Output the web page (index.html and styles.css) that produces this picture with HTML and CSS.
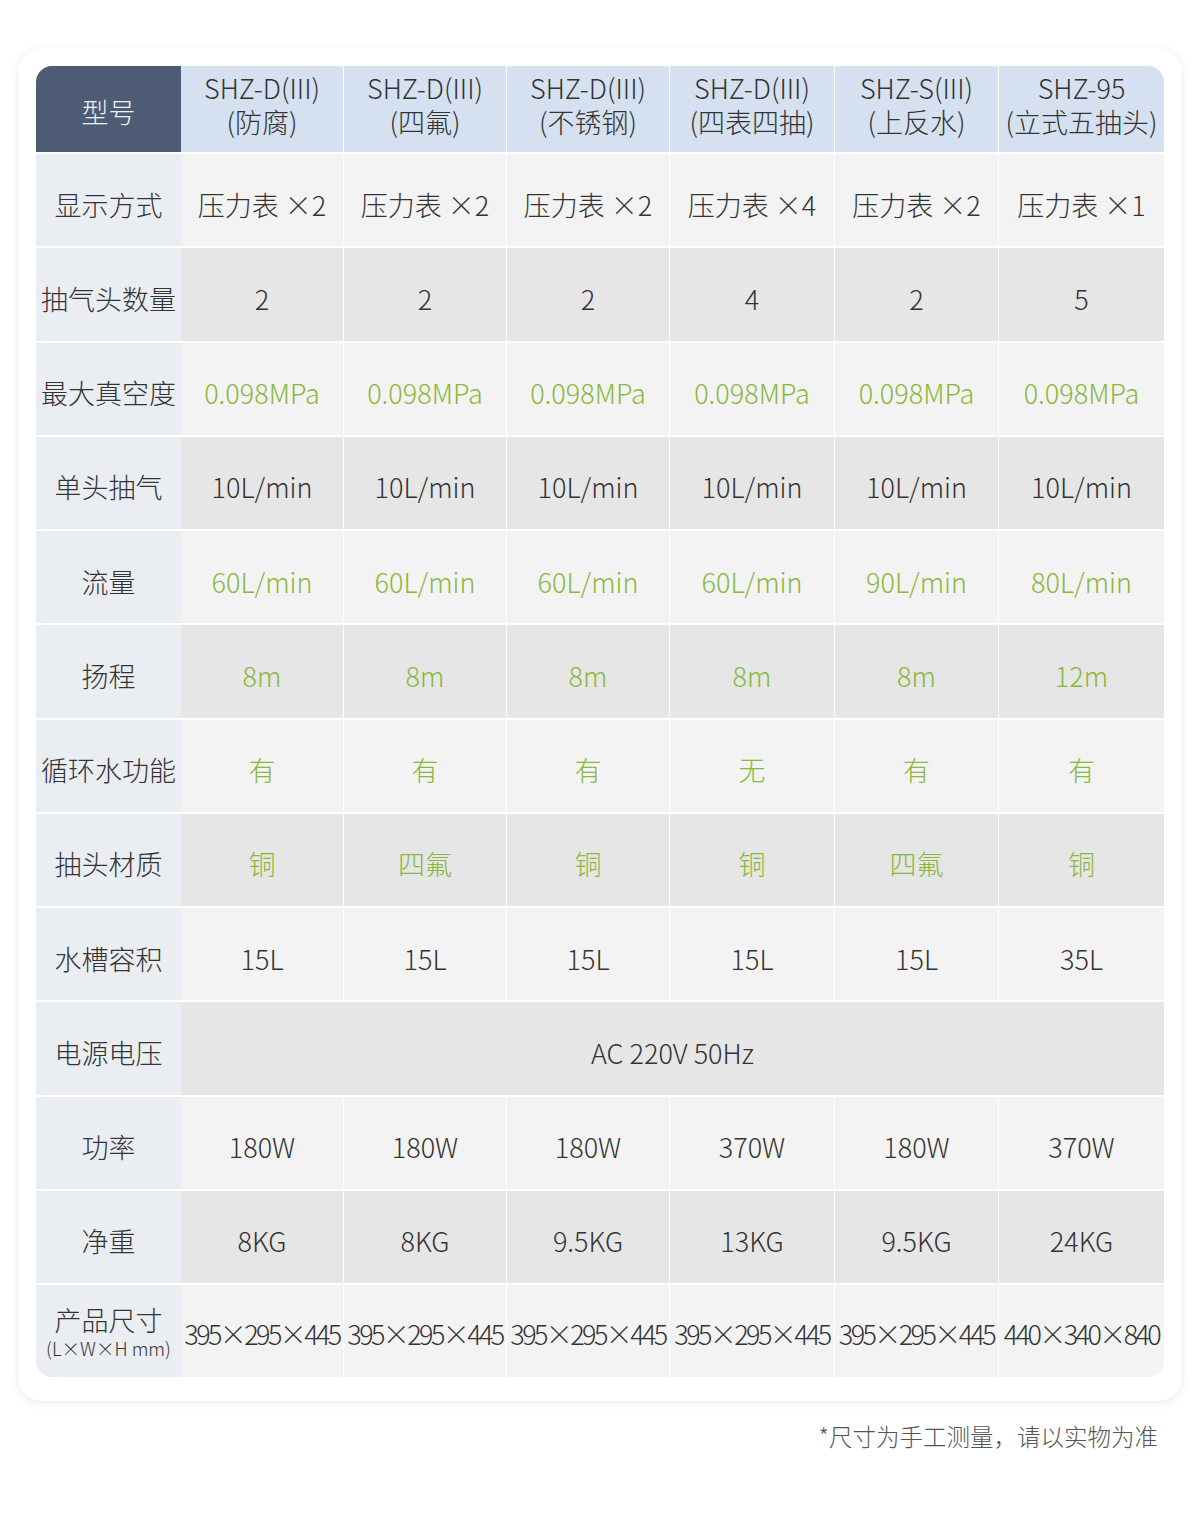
FILE: index.html
```html
<!DOCTYPE html>
<html lang="zh">
<head>
<meta charset="utf-8">
<title>规格参数</title>
<link rel="stylesheet" href="styles.css">
</head>
<body>
<div class="card">
  <div class="spec">
    <div class="row head">
      <div class="lab">型号</div>
      <div class="c">SHZ-D(III)<br>(防腐)</div>
      <div class="c">SHZ-D(III)<br>(四氟)</div>
      <div class="c">SHZ-D(III)<br>(不锈钢)</div>
      <div class="c">SHZ-D(III)<br>(四表四抽)</div>
      <div class="c">SHZ-S(III)<br>(上反水)</div>
      <div class="c">SHZ-95<br>(立式五抽头)</div>
    </div>
    <div class="row light">
      <div class="lab">显示方式</div>
      <div class="c">压力表 ×2</div><div class="c">压力表 ×2</div><div class="c">压力表 ×2</div>
      <div class="c">压力表 ×4</div><div class="c">压力表 ×2</div><div class="c">压力表 ×1</div>
    </div>
    <div class="row dark">
      <div class="lab">抽气头数量</div>
      <div class="c">2</div><div class="c">2</div><div class="c">2</div>
      <div class="c">4</div><div class="c">2</div><div class="c">5</div>
    </div>
    <div class="row light green">
      <div class="lab">最大真空度</div>
      <div class="c">0.098MPa</div><div class="c">0.098MPa</div><div class="c">0.098MPa</div>
      <div class="c">0.098MPa</div><div class="c">0.098MPa</div><div class="c">0.098MPa</div>
    </div>
    <div class="row dark">
      <div class="lab">单头抽气</div>
      <div class="c">10L/min</div><div class="c">10L/min</div><div class="c">10L/min</div>
      <div class="c">10L/min</div><div class="c">10L/min</div><div class="c">10L/min</div>
    </div>
    <div class="row light green">
      <div class="lab">流量</div>
      <div class="c">60L/min</div><div class="c">60L/min</div><div class="c">60L/min</div>
      <div class="c">60L/min</div><div class="c">90L/min</div><div class="c">80L/min</div>
    </div>
    <div class="row dark green">
      <div class="lab">扬程</div>
      <div class="c">8m</div><div class="c">8m</div><div class="c">8m</div>
      <div class="c">8m</div><div class="c">8m</div><div class="c">12m</div>
    </div>
    <div class="row light green">
      <div class="lab">循环水功能</div>
      <div class="c">有</div><div class="c">有</div><div class="c">有</div>
      <div class="c">无</div><div class="c">有</div><div class="c">有</div>
    </div>
    <div class="row dark green">
      <div class="lab">抽头材质</div>
      <div class="c">铜</div><div class="c">四氟</div><div class="c">铜</div>
      <div class="c">铜</div><div class="c">四氟</div><div class="c">铜</div>
    </div>
    <div class="row light">
      <div class="lab">水槽容积</div>
      <div class="c">15L</div><div class="c">15L</div><div class="c">15L</div>
      <div class="c">15L</div><div class="c">15L</div><div class="c">35L</div>
    </div>
    <div class="row dark">
      <div class="lab">电源电压</div>
      <div class="c span">AC 220V 50Hz</div>
    </div>
    <div class="row light">
      <div class="lab">功率</div>
      <div class="c">180W</div><div class="c">180W</div><div class="c">180W</div>
      <div class="c">370W</div><div class="c">180W</div><div class="c">370W</div>
    </div>
    <div class="row dark">
      <div class="lab">净重</div>
      <div class="c">8KG</div><div class="c">8KG</div><div class="c">9.5KG</div>
      <div class="c">13KG</div><div class="c">9.5KG</div><div class="c">24KG</div>
    </div>
    <div class="row light size last">
      <div class="lab"><span class="lab-main">产品尺寸</span><span class="lab-sub">(L×W×H mm)</span></div>
      <div class="c">395×295×445</div><div class="c">395×295×445</div><div class="c">395×295×445</div>
      <div class="c">395×295×445</div><div class="c">395×295×445</div><div class="c">440×340×840</div>
    </div>
  </div>
</div>
<p class="note">*尺寸为手工测量，请以实物为准</p>
</body>
</html>
```

FILE: styles.css
```css
html, body {
  margin: 0;
  padding: 0;
  background: #ffffff;
}
body {
  width: 1200px;
  height: 1522px;
  font-family: "Noto Sans CJK SC", "Noto Sans", sans-serif;
  font-weight: 300;
  color: #333333;
}
.card {
  margin: 48px 18px 0 18px;
  padding: 18px 18px 24px 18px;
  background: #ffffff;
  border-radius: 24px;
  box-shadow: 0 2px 10px rgba(0, 0, 0, 0.09);
}
.spec {
  border-radius: 16px;
  overflow: hidden;
  display: flex;
  flex-direction: column;
}
.row {
  display: grid;
  grid-template-columns: 145px 162px 163px 163px 165px 164px 166px;
  height: 94.25px;
  border-top: 2px solid #ffffff;
  box-sizing: border-box;
}
.row.head {
  height: 86px;
  border-top: none;
}
.row > div {
  display: flex;
  align-items: center;
  justify-content: center;
  text-align: center;
  box-sizing: border-box;
  font-size: 27px;
  padding-top: 8px;
}
.row > .c + .c {
  border-left: 1px solid #ffffff;
}
.lab {
  background: #eaeef3;
  white-space: nowrap;
}
.head > div {
  font-size: 27px;
  line-height: 34px;
  padding-top: 0;
  padding-bottom: 8px;
  background: #d5e1f0;
  white-space: nowrap;
}
.head > .lab {
  background: #4d5c74;
  color: #eef1f5;
  padding-top: 6px;
  padding-bottom: 0;
}
.light > .c {
  background: #f3f3f3;
}
.dark > .c {
  background: #e6e6e6;
}
.green > .c {
  color: #8ab83c;
}
.span {
  grid-column: 2 / 8;
}
.size > .c {
  letter-spacing: -2.6px;
  white-space: nowrap;
  padding-top: 4px;
}
.size > .lab {
  flex-direction: column;
  padding-top: 0;
}
.lab-main {
  line-height: 33px;
}
.lab-sub {
  font-size: 18.5px;
  line-height: 24px;
}
.note {
  margin: 18px 42px 0 0;
  text-align: right;
  font-size: 23.5px;
  color: #555555;
}
```
